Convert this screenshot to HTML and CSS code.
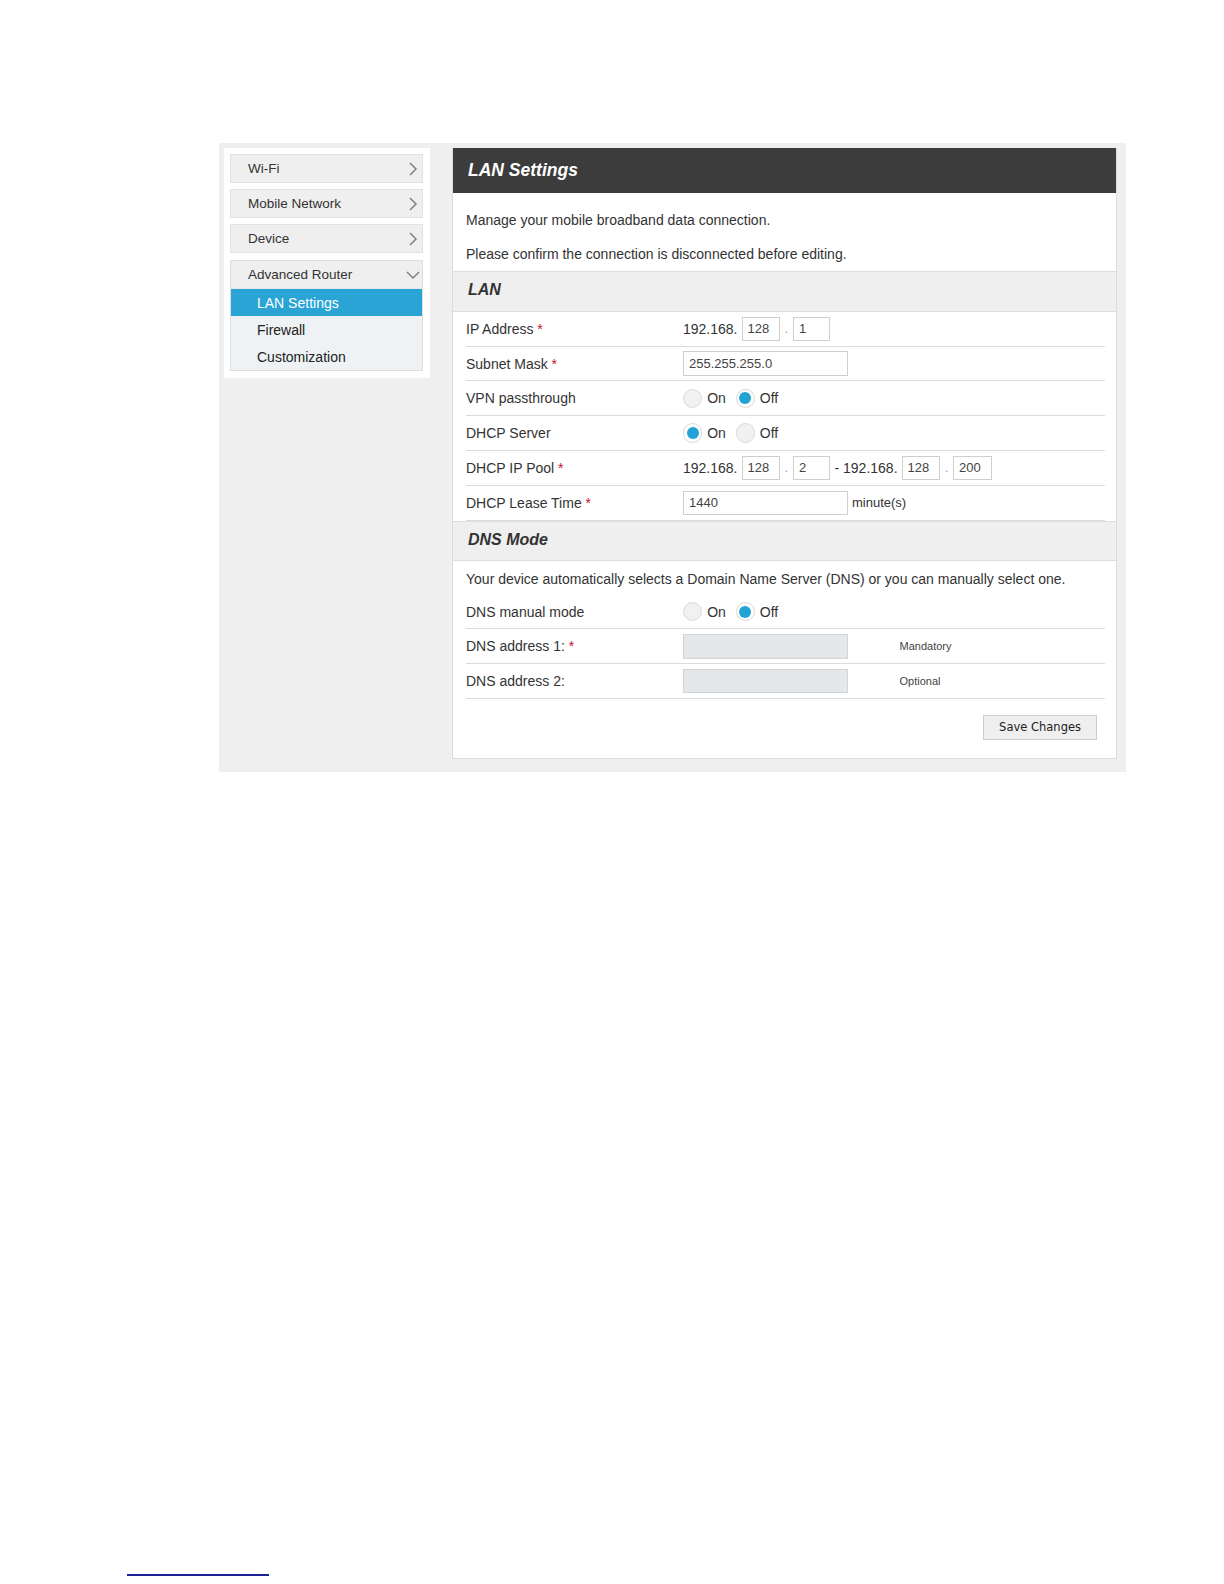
FILE: index.html
```html
<!DOCTYPE html>
<html lang="en">

<head>
  <meta charset="UTF-8" />
  <meta name="viewport" content="width=device-width, initial-scale=1.0" />
  <title>LAN Settings</title>
  <link rel="stylesheet" href="styles.css">
</head>

<body>
  <div class="frame">

    <!-- left menu -->
    <div class="sidebar">
      <div class="menu-item">Wi-Fi
        <svg class="chev" width="10" height="16" viewBox="0 0 10 16"><path d="M2 2 L8 8 L2 14" /></svg>
      </div>
      <div class="menu-item">Mobile Network
        <svg class="chev" width="10" height="16" viewBox="0 0 10 16"><path d="M2 2 L8 8 L2 14" /></svg>
      </div>
      <div class="menu-item">Device
        <svg class="chev" width="10" height="16" viewBox="0 0 10 16"><path d="M2 2 L8 8 L2 14" /></svg>
      </div>
      <div class="menu-group">
        <div class="menu-item open">Advanced Router
          <svg class="chev down" width="16" height="10" viewBox="0 0 16 10"><path d="M2 2 L8 8 L14 2" /></svg>
        </div>
        <div class="sub-item active">LAN Settings</div>
        <div class="sub-item">Firewall</div>
        <div class="sub-item">Customization</div>
      </div>
    </div>

    <!-- main panel -->
    <div class="panel">
      <div class="panel-title">LAN Settings</div>
      <div class="intro">
        <p>Manage your mobile broadband data connection.</p>
        <p>Please confirm the connection is disconnected before editing.</p>
      </div>

      <div class="section-head">LAN</div>
      <div class="rows">
        <div class="row">
          <div class="label">IP Address <span class="req">*</span></div>
          <div class="value">
            <span class="prefix">192.168.</span>
            <input class="box" type="text" value="128"><span class="dot">.</span><input class="box short" type="text" value="1">
          </div>
        </div>
        <div class="row">
          <div class="label">Subnet Mask <span class="req">*</span></div>
          <div class="value"><input class="wide" type="text" value="255.255.255.0"></div>
        </div>
        <div class="row">
          <div class="label">VPN passthrough</div>
          <div class="value">
            <span class="radio"></span><span class="opt">On</span>
            <span class="radio checked"></span><span class="opt">Off</span>
          </div>
        </div>
        <div class="row">
          <div class="label">DHCP Server</div>
          <div class="value">
            <span class="radio checked"></span><span class="opt">On</span>
            <span class="radio"></span><span class="opt">Off</span>
          </div>
        </div>
        <div class="row">
          <div class="label">DHCP IP Pool <span class="req">*</span></div>
          <div class="value">
            <span class="prefix">192.168.</span>
            <input class="box" type="text" value="128"><span class="dot">.</span><input class="box short" type="text" value="2">
            <span class="prefix dash">- 192.168.</span>
            <input class="box" type="text" value="128"><span class="dot">.</span><input class="box" type="text" value="200">
          </div>
        </div>
        <div class="row">
          <div class="label">DHCP Lease Time <span class="req">*</span></div>
          <div class="value"><input class="wide" type="text" value="1440"><span class="unit">minute(s)</span></div>
        </div>
      </div>

      <div class="section-head">DNS Mode</div>
      <div class="rows">
        <p class="desc">Your device automatically selects a Domain Name Server (DNS) or you can manually select one.</p>
        <div class="row">
          <div class="label">DNS manual mode</div>
          <div class="value">
            <span class="radio"></span><span class="opt">On</span>
            <span class="radio checked"></span><span class="opt">Off</span>
          </div>
        </div>
        <div class="row">
          <div class="label">DNS address 1: <span class="req">*</span></div>
          <div class="value"><input class="wide disabled" type="text" disabled><span class="hint">Mandatory</span></div>
        </div>
        <div class="row">
          <div class="label">DNS address 2:</div>
          <div class="value"><input class="wide disabled" type="text" disabled><span class="hint">Optional</span></div>
        </div>
        <div class="actions">
          <input class="save" type="button" value="Save Changes">
        </div>
      </div>
    </div>

  </div>

  <div class="footnote-rule"></div>
</body>

</html>
```

FILE: styles.css
```css
body {
    margin: 0;
    background: #fff;
    font-family: "Liberation Sans", Arial, sans-serif;
    color: #333;
}
.frame {
    display: flex;
    align-items: flex-start;
    gap: 22px;
    width: 907px;
    box-sizing: border-box;
    margin: 143px 0 0 219px;
    padding: 5px 9px 13px 5px;
    background: #efefef;
}

/* sidebar */
.sidebar {
    width: 206px;
    box-sizing: border-box;
    padding: 6px 7px 7px 6px;
    background: #fff;
}
.menu-item {
    position: relative;
    height: 28.5px;
    box-sizing: border-box;
    margin-bottom: 6.7px;
    padding-left: 17px;
    line-height: 28px;
    font-size: 13.5px;
    color: #333;
    background: #efefef;
    border: 1px solid #e2e2e2;
}
.menu-item .chev {
    position: absolute;
    right: 4px;
    top: 6px;
}
.menu-item .chev.down {
    right: 1px;
    top: 9px;
}
.chev path {
    fill: none;
    stroke: #808080;
    stroke-width: 1.5;
}
.menu-group {
    border: 1px solid #dedede;
    background: #eef2f5;
}
.menu-group .menu-item {
    margin: 0;
    border: none;
    border-bottom: 1px solid #e6e6e6;
}
.sub-item {
    height: 27px;
    line-height: 28px;
    padding-left: 26px;
    font-size: 14px;
    color: #222;
}
.sub-item.active {
    background: #29a4d5;
    color: #fff;
}

/* main panel */
.panel {
    width: 665px;
    box-sizing: border-box;
    background: #fff;
    border: 1px solid #dcdcdc;
    border-top: none;
}
.panel-title {
    height: 44.5px;
    line-height: 44px;
    padding-left: 15px;
    background: #3c3c3c;
    color: #fff;
    font-size: 17.5px;
    font-weight: bold;
    font-style: italic;
}
.intro {
    padding: 17.5px 13px 7px;
}
.intro p {
    margin: 0 0 14.4px;
    line-height: 20px;
    font-size: 14px;
}
.intro p:last-child {
    margin-bottom: 0;
}
.section-head {
    height: 40.5px;
    box-sizing: border-box;
    line-height: 36px;
    padding-left: 15px;
    background: #efefef;
    border-top: 1px solid #dedede;
    border-bottom: 1px solid #dedede;
    font-size: 16px;
    font-weight: bold;
    font-style: italic;
    color: #333;
}
.rows {
    padding: 0 11px 0 13px;
}
.row {
    display: flex;
    align-items: center;
    height: 34.8px;
    box-sizing: border-box;
    border-bottom: 1px solid #dcdcdc;
    font-size: 14px;
}
.label {
    width: 217px;
    flex-shrink: 0;
}
.req {
    color: #c8102e;
}
.value {
    display: flex;
    align-items: center;
}
.prefix {
    margin-right: 4px;
}
.dash {
    margin-left: 5px;
}
input[type="text"] {
    height: 24.5px;
    box-sizing: border-box;
    padding: 0 5px;
    border: 1px solid #cfcfcf;
    font-family: inherit;
    font-size: 13px;
    color: #444;
    outline: none;
}
.box {
    width: 38.5px;
}
.box.short {
    width: 36.5px;
}
.dot {
    width: 13px;
    text-align: center;
    font-size: 12px;
    color: #999;
}
.wide {
    width: 165px;
}
.wide.disabled {
    background: #e5e8eb;
    border-color: #d2d5d8;
}
.unit {
    margin-left: 4px;
    font-size: 13px;
}
.hint {
    margin-left: 51.5px;
    font-size: 11px;
    color: #444;
}
.radio {
    width: 19.4px;
    height: 19.4px;
    box-sizing: border-box;
    border-radius: 50%;
    border: 1px solid #dadada;
    background: #f1f1f1;
    display: flex;
    align-items: center;
    justify-content: center;
}
.radio.checked {
    background: #fff;
}
.radio.checked::after {
    content: "";
    width: 12px;
    height: 12px;
    border-radius: 50%;
    background: #22a3d5;
}
.opt {
    margin: 0 9.7px 0 4.8px;
}
.desc {
    margin: 0;
    padding: 7.5px 0 6px;
    line-height: 20px;
    font-size: 14px;
}
.actions {
    display: flex;
    justify-content: flex-end;
    padding: 15.5px 8px 17.5px 0;
}
.save {
    height: 25.5px;
    padding: 0 15px;
    background: #efefef;
    border: 1px solid #cdcdcd;
    font-family: "DejaVu Sans", sans-serif;
    font-size: 11.5px;
    color: #222;
}

.footnote-rule {
    width: 142px;
    height: 2px;
    margin: 802px 0 0 127px;
    background: #1c2399;
}
```
